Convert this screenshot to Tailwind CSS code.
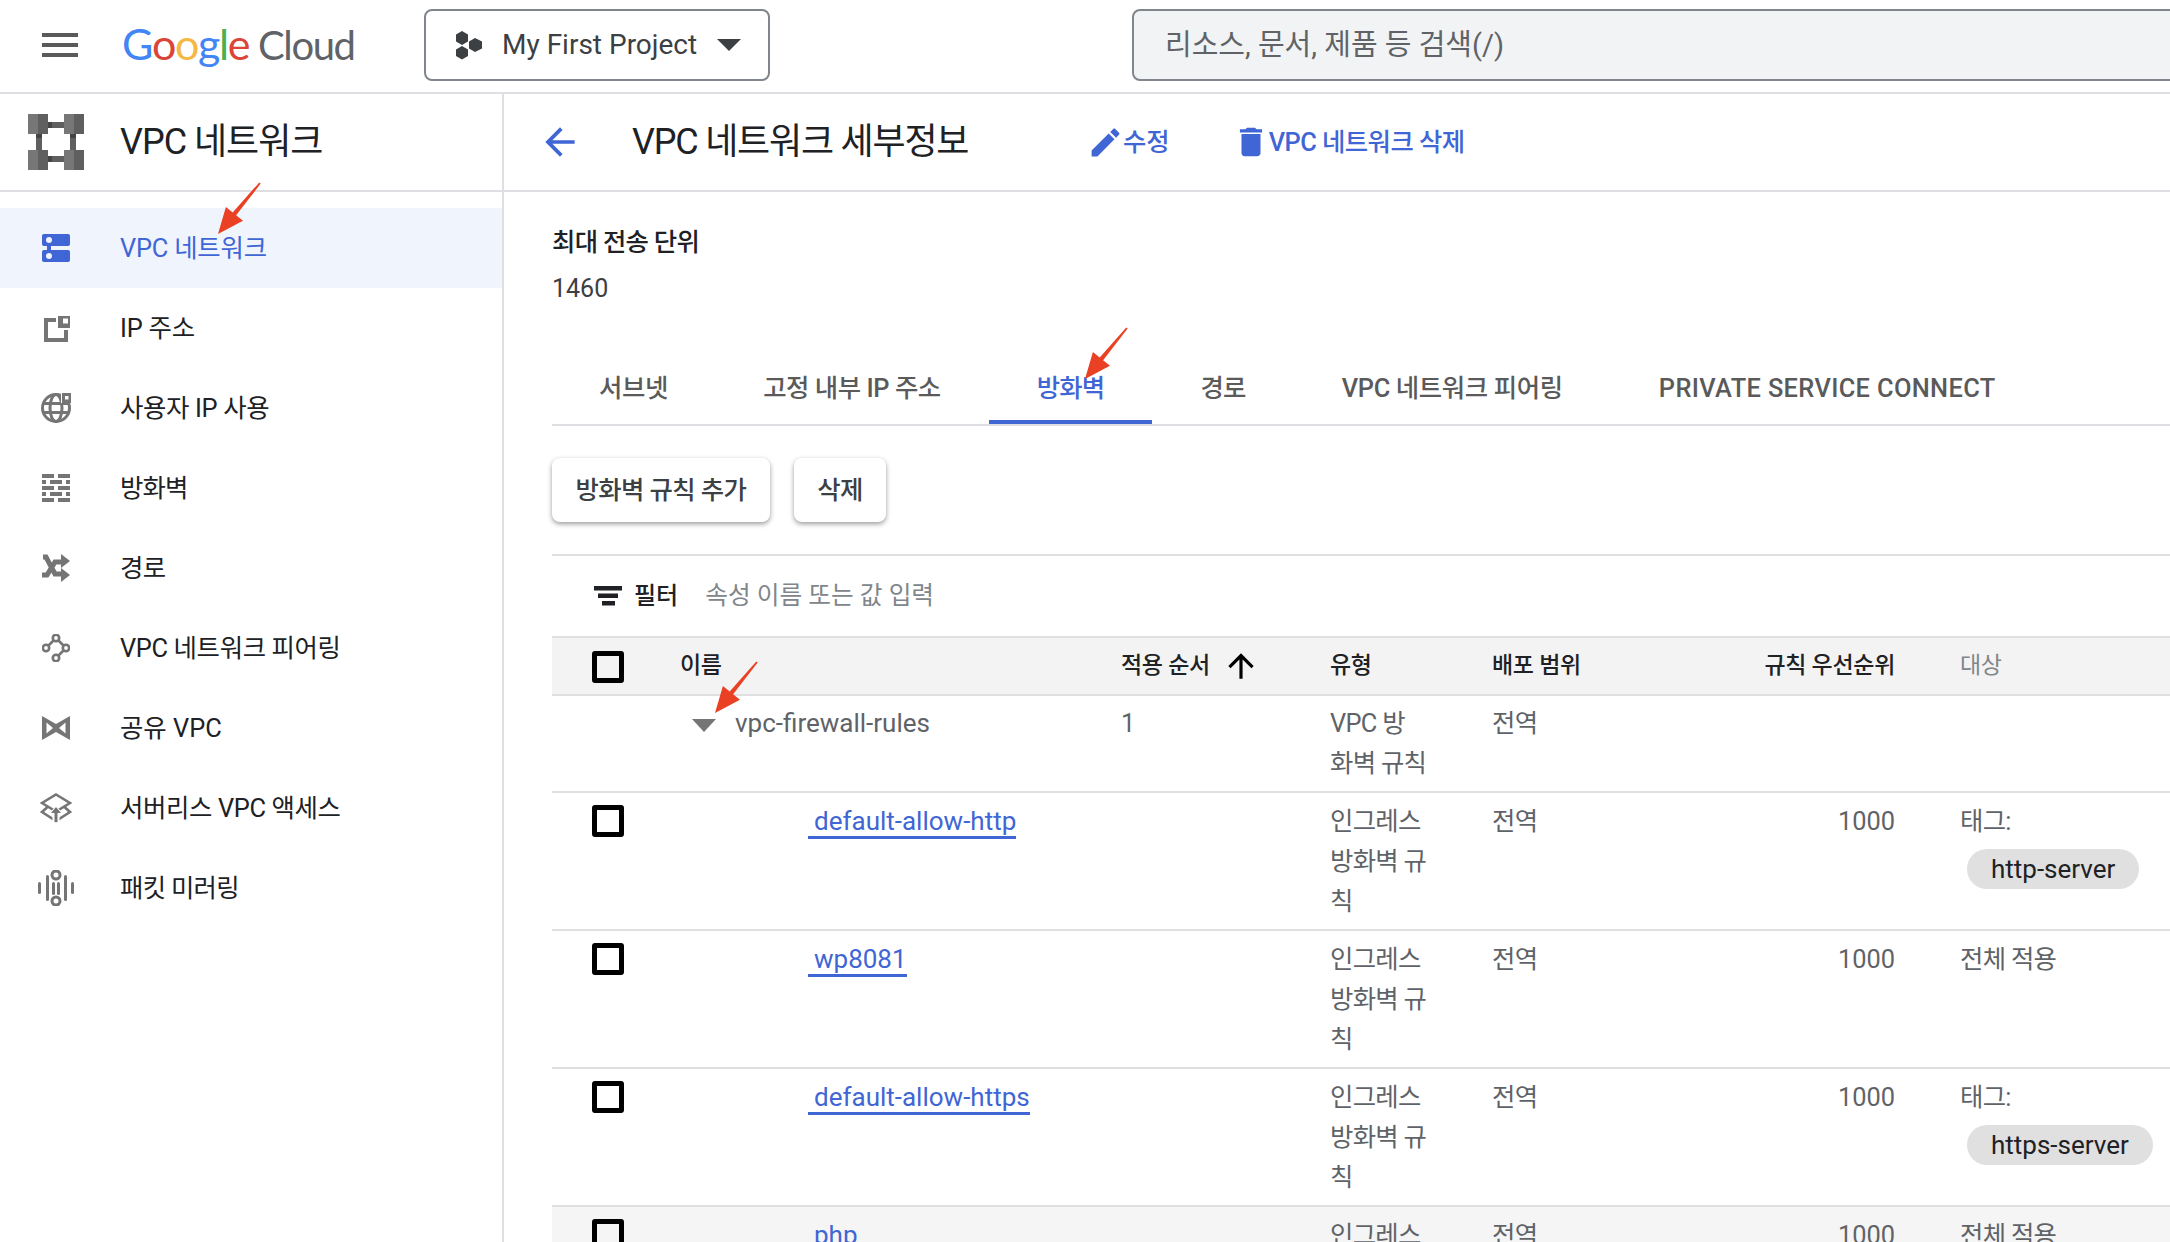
<!DOCTYPE html>
<html lang="ko">
<head>
<meta charset="utf-8">
<title>VPC 네트워크 세부정보</title>
<script src="https://cdn.jsdelivr.net/npm/@tailwindcss/browser@4"></script>
</head>
<body class="[font-family:Roboto,'Noto_Sans_CJK_KR',sans-serif] bg-white">
<div class="relative w-[2170px] h-[1242px] overflow-hidden text-[25.4px] leading-[40px] text-[#5f6368]">

  <!-- top bar -->
  <header class="h-[94px] border-b-2 border-[#dfdfe3] flex items-center">
    <svg class="ml-[42px] w-[36px] h-[24px] shrink-0 -mt-[2px]" viewBox="0 0 36 24" fill="#5a5a5a"><rect y="0" width="36" height="4"/><rect y="10" width="36" height="4"/><rect y="20" width="36" height="4"/></svg>
    <div class="ml-[44px] w-[234px] shrink-0 flex items-baseline [font-family:Lato,sans-serif] text-[43px] leading-[50px] tracking-[-1.4px] -mt-[4px]">
      <span class="text-[#4285f4]">G</span><span class="text-[#db4437]">o</span><span class="text-[#f4b942]">o</span><span class="text-[#4285f4]">g</span><span class="text-[#4caf50]">l</span><span class="text-[#db4437]">e</span>
      <span class="ml-[9px] text-[#5f6368] text-[40px]">Cloud</span>
    </div>
    <button class="ml-[68px] w-[346px] h-[72px] shrink-0 border-2 border-[#80868b] rounded-lg flex items-center -mt-[2px] text-[#3c4043] text-[28px]">
      <svg class="ml-[27px] w-[30px] h-[30px] shrink-0" viewBox="0 0 30 30" fill="#3c4043"><polygon points="9,1 15,4.5 15,11.5 9,15 3,11.5 3,4.5"/><polygon points="9,16 15,19.5 15,26 9,29.5 3,26 3,19.5"/><polygon points="22,8 29,11.5 29,18.5 22,22 16,18.5 16,11.5"/></svg>
      <span class="ml-[19px] w-[215px] text-left">My First Project</span>
      <svg class="w-[24px] h-[12px] shrink-0" viewBox="0 0 24 12" fill="#3c4043"><polygon points="0,0 24,0 12,12"/></svg>
    </button>
    <div class="ml-[362px] w-[1100px] h-[72px] shrink-0 -mt-[2px] bg-[#f1f3f4] border-2 border-[#80868b] rounded-lg flex items-center pl-[31px] text-[29px] text-[#5f6368]">리소스, 문서, 제품 등 검색(/)</div>
  </header>

  <div class="flex">
    <!-- sidebar -->
    <aside class="w-[504px] h-[1148px] shrink-0 border-r-2 border-[#dfdfe3]">
      <div class="h-[98px] border-b-2 border-[#dfdfe3] flex items-center text-[36px] text-[#202124]">
        <svg class="ml-[28px] w-[56px] h-[56px] shrink-0" viewBox="0 0 56 56">
          <rect x="0" y="0" width="10" height="20" fill="#777"/><rect x="10" y="0" width="10" height="20" fill="#5f5f5f"/>
          <rect x="36" y="0" width="10" height="20" fill="#777"/><rect x="46" y="0" width="10" height="20" fill="#5f5f5f"/>
          <rect x="0" y="36" width="10" height="20" fill="#777"/><rect x="10" y="36" width="10" height="20" fill="#5f5f5f"/>
          <rect x="36" y="36" width="10" height="20" fill="#777"/><rect x="46" y="36" width="10" height="20" fill="#5f5f5f"/>
          <rect x="20" y="8" width="16" height="6" fill="#5f5f5f"/><rect x="20" y="8" width="4" height="6" fill="#444"/>
          <rect x="20" y="42" width="16" height="6" fill="#5f5f5f"/><rect x="20" y="42" width="4" height="6" fill="#444"/>
          <rect x="8" y="20" width="6" height="16" fill="#5f5f5f"/><rect x="8" y="20" width="6" height="4" fill="#444"/>
          <rect x="42" y="20" width="6" height="16" fill="#5f5f5f"/><rect x="42" y="20" width="6" height="4" fill="#444"/>
        </svg>
        <span class="ml-[36px] tracking-[-1px]">VPC 네트워크</span>
      </div>
      <nav class="pt-[16px] text-[#202124]">
        <a class="h-[80px] flex items-center bg-[#f0f4fd] text-[#3f66d4]">
          <svg class="ml-[42px] w-[28px] h-[28px] shrink-0" viewBox="0 0 28 28"><rect x="5" y="10" width="4" height="8" fill="#3f66d4"/><rect width="28" height="12" rx="2" fill="#3f66d4"/><rect y="16" width="28" height="12" rx="2" fill="#3f66d4"/><circle cx="7" cy="6" r="3" fill="#f0f4fd"/><circle cx="7" cy="22" r="3" fill="#f0f4fd"/></svg>
          <span class="ml-[50px] tracking-[-0.2px] -mt-[1px]">VPC 네트워크</span>
        </a>
        <a class="h-[80px] flex items-center">
          <svg class="ml-[42px] w-[28px] h-[28px] shrink-0" viewBox="0 0 28 28" fill="#757575"><path d="M2 4h12v4H6v16h16v-8h4v12H2z"/><path fill-rule="evenodd" d="M16 2h12v12H16zM21 4.500h5v5h-5z"/></svg>
          <span class="ml-[50px] tracking-[-0.2px]">IP 주소</span>
        </a>
        <a class="h-[80px] flex items-center">
          <svg class="ml-[41px] w-[30px] h-[30px] shrink-0" viewBox="0 0 30 30" fill="none" stroke="#757575" stroke-width="3"><circle cx="15" cy="15" r="13.500"/><ellipse cx="15" cy="15" rx="6" ry="13.500"/><path d="M1.500 10.500h27M1.500 19.500h27"/><rect x="20" y="-1" width="11" height="11" fill="#fff" stroke="none"/><rect x="21" y="0" width="9" height="10" fill="#757575" stroke="none"/><rect x="24" y="3" width="3.500" height="3.500" fill="#fff" stroke="none"/></svg>
          <span class="ml-[49px] tracking-[-0.35px]">사용자 IP 사용</span>
        </a>
        <a class="h-[80px] flex items-center">
          <svg class="ml-[42px] w-[28px] h-[28px] shrink-0" viewBox="0 0 28 28" fill="#757575"><path d="M0 0h12v4H0zM16 0h12v4H16zM0 6h4v4H0zM8 6h12v4H8zM24 6h4v4h-4zM0 12h12v4H0zM16 12h12v4H16zM0 18h4v4H0zM8 18h12v4H8zM24 18h4v4h-4zM0 24h12v4H0zM16 24h12v4H16z"/></svg>
          <span class="ml-[50px] tracking-[-0.8px] -mt-[1px]">방화벽</span>
        </a>
        <a class="h-[80px] flex items-center">
          <svg class="ml-[42px] w-[28px] h-[28px] shrink-0" viewBox="0 0 28 28"><path d="M1 3 L4 3 L13 20 L20 20 M0 21 L5 21 L13 8 L20 8" fill="none" stroke="#757575" stroke-width="5"/><polygon points="19,0 28,7 19,14" fill="#757575"/><polygon points="19,14 28,21 19,28" fill="#757575"/></svg>
          <span class="ml-[50px] tracking-[-0.7px] -mt-[1px]">경로</span>
        </a>
        <a class="h-[80px] flex items-center">
          <svg class="ml-[42px] w-[28px] h-[28px] shrink-0" viewBox="0 0 28 28" fill="none" stroke="#757575" stroke-width="2.600"><circle cx="14" cy="4" r="3.200"/><circle cx="4" cy="14" r="3.200"/><circle cx="24" cy="14" r="3.200"/><circle cx="14" cy="24" r="3.200"/><path d="M11.500 6.500L6.500 11.500M16.500 6.500L21.500 11.500M21.500 16.500L16.500 21.500"/></svg>
          <span class="ml-[50px] tracking-[-0.35px] -mt-[1px]">VPC 네트워크 피어링</span>
        </a>
        <a class="h-[80px] flex items-center">
          <svg class="ml-[42px] w-[28px] h-[24px] shrink-0" viewBox="0 0 28 24" fill="#757575"><path fill-rule="evenodd" d="M0 0L14 8L28 0V24L14 16L0 24ZM4.500 6.500V17.500L11 12ZM23.500 6.500L17 12L23.500 17.500Z"/></svg>
          <span class="ml-[50px] -mt-[1px]">공유 VPC</span>
        </a>
        <a class="h-[80px] flex items-center">
          <svg class="ml-[40px] w-[32px] h-[30px] shrink-0" viewBox="0 0 32 30" fill="none" stroke="#757575" stroke-width="2.600"><path d="M16 1.500L30 10L16 18.500L2 10Z"/><path d="M7.500 14L2 19L16 28L30 19L24.500 14"/><polygon points="8.500,21 16,13 23.500,21 19.500,21 19.500,28 12.500,28 12.500,21" fill="#fff" stroke="none"/><path d="M16 28V18" stroke-width="3"/><polygon points="11,20 16,14 21,20" fill="#757575" stroke="none"/></svg>
          <span class="ml-[48px] tracking-[-0.35px] -mt-[1px]">서버리스 VPC 액세스</span>
        </a>
        <a class="h-[80px] flex items-center">
          <svg class="ml-[38px] w-[36px] h-[36px] shrink-0" viewBox="0 0 36 36"><g fill="none" stroke="#757575" stroke-width="3"><circle cx="18" cy="5" r="4"/><circle cx="18" cy="31" r="4"/></g><g fill="#757575"><rect x="0" y="12" width="3" height="12" rx="1.500"/><rect x="8" y="5" width="3" height="26" rx="1.500"/><rect x="14" y="12" width="3" height="13" rx="1.500"/><rect x="19" y="12" width="3" height="13" rx="1.500"/><rect x="26" y="5" width="3" height="26" rx="1.500"/><rect x="33" y="12" width="3" height="12" rx="1.500"/></g></svg>
          <span class="ml-[46px] tracking-[-0.7px] -mt-[1px]">패킷 미러링</span>
        </a>
      </nav>
    </aside>

    <!-- main -->
    <main class="flex-1 min-w-0">
      <div class="h-[98px] border-b-2 border-[#dfdfe3] flex items-center">
        <svg class="ml-[34px] w-[44px] h-[44px] shrink-0" viewBox="0 0 24 24" fill="#3f66d4"><path d="M20 11H7.830l5.590-5.590L12 4l-8 8 8 8 1.410-1.410L7.830 13H20v-2z"/></svg>
        <h1 class="ml-[50px] w-[455px] shrink-0 text-[36px] text-[#202124] tracking-[-1.200px]">VPC 네트워크 세부정보</h1>
        <a class="flex items-center text-[#3f66d4] font-medium">
          <svg class="w-[37px] h-[37px] shrink-0" viewBox="0 0 24 24" fill="#3f66d4"><path d="M3 17.250V21h3.750L17.810 9.940l-3.750-3.750L3 17.250zM20.710 7.040c.39-.39.39-1.020 0-1.410l-2.340-2.340c-.39-.39-1.020-.39-1.410 0l-1.830 1.830 3.750 3.750 1.830-1.830z"/></svg>
          <span class="-ml-[1px]">수정</span>
        </a>
        <a class="ml-[62px] flex items-center text-[#3f66d4] font-medium">
          <svg class="w-[38px] h-[38px] shrink-0" viewBox="0 0 24 24" fill="#3f66d4"><path d="M6 19c0 1.100.9 2 2 2h8c1.100 0 2-.9 2-2V7H6v12zM19 4h-3.500l-1-1h-5l-1 1H5v2h14V4z"/></svg>
          <span class="-ml-[1px] tracking-[-0.55px]">VPC 네트워크 삭제</span>
        </a>
      </div>

      <div class="pl-[48px]">
        <div class="pt-[30px] font-medium text-[#202124] tracking-[-0.7px]">최대 전송 단위</div>
        <div class="mt-[7px] text-[#3c4043] text-[25px]">1460</div>

        <div class="mt-[43px] flex border-b-2 border-[#dfdfe3] font-medium text-[#5a5a5a]">
          <a class="h-[72px] px-[47px] flex items-center tracking-[-0.3px]">서브넷</a>
          <a class="h-[72px] px-[48px] flex items-center tracking-[-0.45px]">고정 내부 IP 주소</a>
          <a class="h-[72px] px-[48px] flex items-center border-b-4 border-[#3f66d4] text-[#3f66d4] tracking-[-0.8px]"><span class="mt-[4px]">방화벽</span></a>
          <a class="h-[72px] px-[48px] flex items-center tracking-[-0.7px]">경로</a>
          <a class="h-[72px] px-[48px] flex items-center tracking-[-0.35px]">VPC 네트워크 피어링</a>
          <a class="h-[72px] px-[48px] flex items-center tracking-[0.35px]">PRIVATE SERVICE CONNECT</a>
        </div>

        <div class="mt-[32px] flex font-medium text-[#3c4043] tracking-[-0.6px]">
          <button class="h-[64px] px-[23.500px] rounded-lg bg-white shadow-[0_2px_5px_rgba(0,0,0,0.4)]">방화벽 규칙 추가</button>
          <button class="ml-[24px] h-[64px] px-[23.500px] rounded-lg bg-white shadow-[0_2px_5px_rgba(0,0,0,0.4)]">삭제</button>
        </div>

        <div class="mt-[32px] h-[82px] border-t-2 border-[#e0e0e0] flex items-center">
          <svg class="ml-[42px] w-[28px] h-[20px] shrink-0" viewBox="0 0 28 20" fill="#202124"><rect x="0" y="0" width="28" height="4.500"/><rect x="4" y="7.500" width="20" height="4.500"/><rect x="8" y="15" width="13" height="4.500"/></svg>
          <span class="ml-[12px] font-medium text-[#202124] text-[24px]">필터</span>
          <span class="ml-[27px] text-[#80868b] text-[24.700px]">속성 이름 또는 값 입력</span>
        </div>

        <div class="text-[#5f6368]">
          <!-- header -->
          <div class="grid grid-cols-[128px_441px_209px_162px_203px_200px_65px_210px] h-[60px] items-center bg-[#f3f3f3] border-y-2 border-[#e0e0e0] font-medium text-[#202124] text-[23px] tracking-[-0.3px]">
            <span class="ml-[40px] mt-[2px] block w-[32px] h-[32px] border-[5px] border-black rounded-[3px]"></span>
            <span>이름</span>
            <span class="flex items-center">적용 순서<svg class="ml-[12px] w-[38px] h-[38px]" viewBox="0 0 24 24" fill="#000"><path d="M4 12l1.410 1.410L11 7.830V20h2V7.830l5.580 5.590L20 12l-8-8-8 8z"/></svg></span>
            <span>유형</span>
            <span>배포 범위</span>
            <span class="text-right">규칙 우선순위</span>
            <span></span>
            <span class="font-normal text-[#80868b]">대상</span>
          </div>
          <!-- group row -->
          <div class="grid grid-cols-[128px_441px_209px_162px_203px_200px_65px_210px] h-[97px] pt-[7px] border-b-2 border-[#e0e0e0]">
            <span></span>
            <span class="flex items-center h-[40px]"><svg class="ml-[12px] w-[24px] h-[13px] shrink-0 mt-[4px]" viewBox="0 0 24 13" fill="#757575"><polygon points="0,0 24,0 12,13"/></svg><span class="ml-[19px] text-[26px]">vpc-firewall-rules</span></span>
            <span>1</span>
            <span class="tracking-[-0.7px]">VPC 방<br>화벽 규칙</span>
            <span class="tracking-[-0.7px]">전역</span>
            <span></span><span></span><span></span>
          </div>
          <!-- rows -->
          <div class="grid grid-cols-[128px_441px_209px_162px_203px_200px_65px_210px] h-[138px] pt-[8px] border-b-2 border-[#e0e0e0]">
            <span class="ml-[40px] mt-[4px] block w-[32px] h-[32px] border-[5px] border-black rounded-[3px]"></span>
            <span><a class="ml-[128px] inline-block h-[38px] pl-[6px] border-b-[3px] border-[#3f66d4] text-[#3f66d4] text-[26px]">default-allow-http</a></span>
            <span></span>
            <span class="tracking-[-0.7px]">인그레스<br>방화벽 규<br>칙</span>
            <span class="tracking-[-0.7px]">전역</span>
            <span class="text-right">1000</span>
            <span></span>
            <span class="tracking-[-0.7px]">태그:<span class="block mt-[8px] ml-[7px] w-fit h-[40px] px-[24px] rounded-full bg-[#e0e0e0] text-[#202124] text-[26px] tracking-normal">http-server</span></span>
          </div>
          <div class="grid grid-cols-[128px_441px_209px_162px_203px_200px_65px_210px] h-[138px] pt-[8px] border-b-2 border-[#e0e0e0]">
            <span class="ml-[40px] mt-[4px] block w-[32px] h-[32px] border-[5px] border-black rounded-[3px]"></span>
            <span><a class="ml-[128px] inline-block h-[38px] pl-[6px] border-b-[3px] border-[#3f66d4] text-[#3f66d4] text-[26px]">wp8081</a></span>
            <span></span>
            <span class="tracking-[-0.7px]">인그레스<br>방화벽 규<br>칙</span>
            <span class="tracking-[-0.7px]">전역</span>
            <span class="text-right">1000</span>
            <span></span>
            <span class="tracking-[-0.7px]">전체 적용</span>
          </div>
          <div class="grid grid-cols-[128px_441px_209px_162px_203px_200px_65px_210px] h-[138px] pt-[8px] border-b-2 border-[#e0e0e0]">
            <span class="ml-[40px] mt-[4px] block w-[32px] h-[32px] border-[5px] border-black rounded-[3px]"></span>
            <span><a class="ml-[128px] inline-block h-[38px] pl-[6px] border-b-[3px] border-[#3f66d4] text-[#3f66d4] text-[26px]">default-allow-https</a></span>
            <span></span>
            <span class="tracking-[-0.7px]">인그레스<br>방화벽 규<br>칙</span>
            <span class="tracking-[-0.7px]">전역</span>
            <span class="text-right">1000</span>
            <span></span>
            <span class="tracking-[-0.7px]">태그:<span class="block mt-[8px] ml-[7px] w-fit h-[40px] px-[24px] rounded-full bg-[#e0e0e0] text-[#202124] text-[26px] tracking-normal">https-server</span></span>
          </div>
          <div class="grid grid-cols-[128px_441px_209px_162px_203px_200px_65px_210px] h-[138px] pt-[8px] bg-[#f5f5f5]">
            <span class="ml-[40px] mt-[4px] block w-[32px] h-[32px] border-[5px] border-black rounded-[3px]"></span>
            <span><a class="ml-[128px] inline-block h-[38px] pl-[6px] border-b-[3px] border-[#3f66d4] text-[#3f66d4] text-[26px]">php</a></span>
            <span></span>
            <span class="tracking-[-0.7px]">인그레스<br>방화벽 규<br>칙</span>
            <span class="tracking-[-0.7px]">전역</span>
            <span class="text-right">1000</span>
            <span></span>
            <span class="tracking-[-0.7px]">전체 적용</span>
          </div>
        </div>
      </div>
    </main>
  </div>

  <!-- annotation arrows -->
  <svg class="absolute left-[214px] top-[178px] w-[50px] h-[60px]" viewBox="0 0 50 60"><polygon fill="#ea4124" points="4,56 11.900,28.900 18.700,34.400 45.300,4.400 46.700,5.600 22.100,37.200 29,42.700"/></svg>
  <svg class="absolute left-[1081px] top-[323px] w-[50px] h-[60px]" viewBox="0 0 50 60"><polygon fill="#ea4124" points="4,56 11.900,28.900 18.700,34.400 45.300,4.400 46.700,5.600 22.100,37.200 29,42.700"/></svg>
  <svg class="absolute left-[711px] top-[657px] w-[50px] h-[60px]" viewBox="0 0 50 60"><polygon fill="#ea4124" points="4,56 11.900,28.900 18.700,34.400 45.300,4.400 46.700,5.600 22.100,37.200 29,42.700"/></svg>
</div>
</body>
</html>
